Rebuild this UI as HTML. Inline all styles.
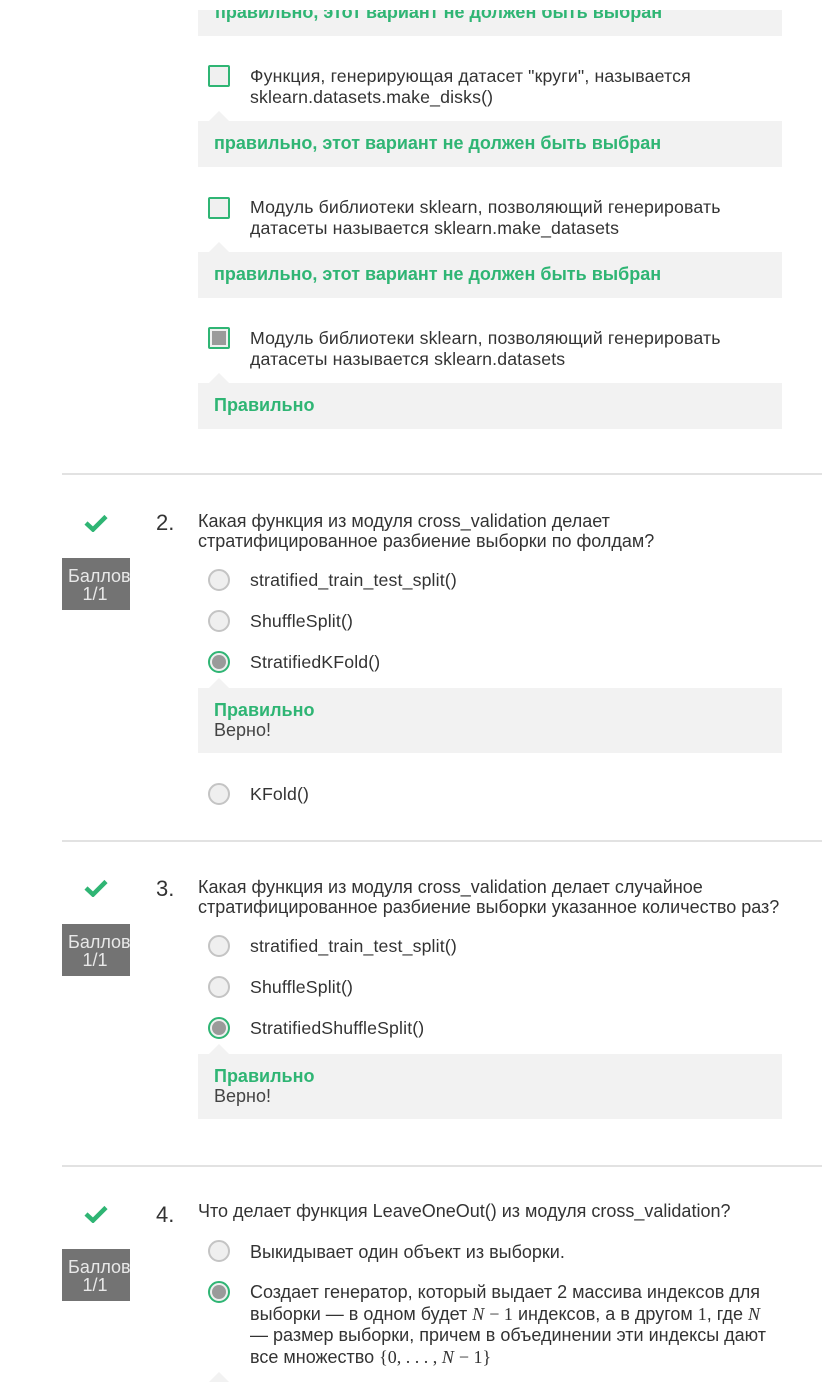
<!DOCTYPE html>
<html><head><meta charset="utf-8"><style>
*{margin:0;padding:0;box-sizing:border-box}
body{width:840px;height:1380px;overflow:hidden;background:#fff;position:relative;font-family:"Liberation Sans",Arial,sans-serif;color:#333}
.a{position:absolute;white-space:nowrap}
.fb{position:absolute;left:198px;width:584px;background:#f2f2f2}
.fb:before{content:"";position:absolute;left:11px;top:-10px;border-left:10px solid transparent;border-right:10px solid transparent;border-bottom:10px solid #f2f2f2}
.fb.first:before{display:none}
.g{color:#2fb574;font-weight:bold;font-size:18px}
.opt{font-size:17.7px;line-height:21px;color:#333;letter-spacing:0.15px}
.q{font-size:18px;line-height:20px;color:#333}
.cb{position:absolute;left:208px;width:22px;height:22px;border:2px solid #2fb574;border-radius:2px;background:#f0f0f0}
.cb.on:after{content:"";position:absolute;left:2px;top:2px;width:14px;height:14px;background:#9a9a9a}
.rd{position:absolute;left:208px;width:22px;height:22px;border:2px solid #c4c4c4;border-radius:50%;background:#efefef}
.rd.on{border-color:#2fb574}
.rd.on:after{content:"";position:absolute;left:2px;top:2px;width:14px;height:14px;border-radius:50%;background:#9a9a9a}
.sep{position:absolute;left:62px;width:760px;height:2px;background:#e2e2e2}
.badge{position:absolute;left:62px;width:68px;height:52px;background:#737373;color:#e8e8e8;font-size:18px;line-height:18px;padding-top:9px;overflow:hidden}
.badge span{display:block;position:absolute;left:6px;top:9px;white-space:nowrap}
.badge b{display:block;position:absolute;left:0;width:66px;text-align:center;top:27px;font-weight:normal}
.num{position:absolute;left:156px;font-size:22px;color:#333}
.chk{position:absolute;left:84px}
.n{font-family:"Liberation Serif",serif;font-style:italic}
.m{font-family:"Liberation Serif",serif}
</style></head><body>

<div class="fb first" style="top:10px;height:26px;overflow:hidden"><div class="a g" style="left:17px;top:-8px;line-height:20px">правильно, этот вариант не должен быть выбран</div></div>

<div class="cb" style="top:65px"></div>
<div class="a opt" style="left:250px;top:66px">Функция, генерирующая датасет "круги", называется<br>sklearn.datasets.make_disks()</div>
<div class="fb" style="top:121px;height:46px"><div class="a g" style="left:16px;top:12px;line-height:20px">правильно, этот вариант не должен быть выбран</div></div>

<div class="cb" style="top:197px"></div>
<div class="a opt" style="left:250px;top:197px">Модуль библиотеки sklearn, позволяющий генерировать<br>датасеты называется sklearn.make_datasets</div>
<div class="fb" style="top:252px;height:46px"><div class="a g" style="left:16px;top:12px;line-height:20px">правильно, этот вариант не должен быть выбран</div></div>

<div class="cb on" style="top:327px"></div>
<div class="a opt" style="left:250px;top:328px">Модуль библиотеки sklearn, позволяющий генерировать<br>датасеты называется sklearn.datasets</div>
<div class="fb" style="top:383px;height:46px"><div class="a g" style="left:16px;top:12px;line-height:20px">Правильно</div></div>

<div class="sep" style="top:473px"></div>

<!-- Q2 -->
<svg class="chk" style="top:514px" width="24" height="18" viewBox="0 0 24 18"><path d="M2 9 L9 15.5 L22 2.5" fill="none" stroke="#2fb574" stroke-width="4.5"/></svg>
<div class="num" style="top:510px">2.</div>
<div class="a q" style="left:198px;top:511px">Какая функция из модуля cross_validation делает<br>стратифицированное разбиение выборки по фолдам?</div>
<div class="badge" style="top:558px"><span>Баллов</span><b>1/1</b></div>
<div class="rd" style="top:569px"></div><div class="a opt" style="left:250px;top:570px">stratified_train_test_split()</div>
<div class="rd" style="top:610px"></div><div class="a opt" style="left:250px;top:611px">ShuffleSplit()</div>
<div class="rd on" style="top:651px"></div><div class="a opt" style="left:250px;top:652px">StratifiedKFold()</div>
<div class="fb" style="top:688px;height:65px"><div class="a g" style="left:16px;top:12px;line-height:20px">Правильно</div><div class="a" style="left:16px;top:32px;font-size:18px;line-height:20px;color:#444">Верно!</div></div>
<div class="rd" style="top:783px"></div><div class="a opt" style="left:250px;top:784px">KFold()</div>

<div class="sep" style="top:840px"></div>

<!-- Q3 -->
<svg class="chk" style="top:879px" width="24" height="18" viewBox="0 0 24 18"><path d="M2 9 L9 15.5 L22 2.5" fill="none" stroke="#2fb574" stroke-width="4.5"/></svg>
<div class="num" style="top:876px">3.</div>
<div class="a q" style="left:198px;top:877px">Какая функция из модуля cross_validation делает случайное<br>стратифицированное разбиение выборки указанное количество раз?</div>
<div class="badge" style="top:924px"><span>Баллов</span><b>1/1</b></div>
<div class="rd" style="top:935px"></div><div class="a opt" style="left:250px;top:936px">stratified_train_test_split()</div>
<div class="rd" style="top:976px"></div><div class="a opt" style="left:250px;top:977px">ShuffleSplit()</div>
<div class="rd on" style="top:1017px"></div><div class="a opt" style="left:250px;top:1018px">StratifiedShuffleSplit()</div>
<div class="fb" style="top:1054px;height:65px"><div class="a g" style="left:16px;top:12px;line-height:20px">Правильно</div><div class="a" style="left:16px;top:32px;font-size:18px;line-height:20px;color:#444">Верно!</div></div>

<div class="sep" style="top:1165px"></div>

<!-- Q4 -->
<svg class="chk" style="top:1205px" width="24" height="18" viewBox="0 0 24 18"><path d="M2 9 L9 15.5 L22 2.5" fill="none" stroke="#2fb574" stroke-width="4.5"/></svg>
<div class="num" style="top:1202px">4.</div>
<div class="a q" style="left:198px;top:1201px">Что делает функция LeaveOneOut() из модуля cross_validation?</div>
<div class="badge" style="top:1249px"><span>Баллов</span><b>1/1</b></div>
<div class="rd" style="top:1240px"></div><div class="a q" style="left:250px;top:1242px">Выкидывает один объект из выборки.</div>
<div class="rd on" style="top:1281px"></div>
<div class="a q" style="left:250px;top:1282px;line-height:21.5px">Создает генератор, который выдает 2 массива индексов для<br>выборки — в одном будет <span class="n">N</span> <span class="m">− 1</span> индексов, а в другом <span class="m">1</span>, где <span class="n">N</span><br>— размер выборки, причем в объединении эти индексы дают<br>все множество <span class="m">{0, . . . , </span><span class="n">N</span> <span class="m">− 1}</span></div>
<div class="a" style="left:209px;top:1372px;border-left:10px solid transparent;border-right:10px solid transparent;border-bottom:10px solid #f2f2f2;width:0;height:0"></div>
</body></html>
